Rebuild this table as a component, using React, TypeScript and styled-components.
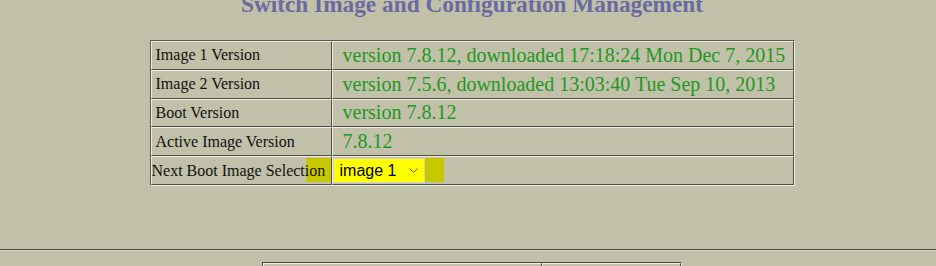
import React from "react";
import styled, { createGlobalStyle } from "styled-components";

const Global = createGlobalStyle`
  html, body { margin: 0; padding: 0; overflow: hidden; }
  body { background: #c1c0a8; font-family: "Liberation Serif", "Times New Roman", serif; }
`;

const Page = styled.div`
  width: 936px;
  height: 266px;
  overflow: hidden;
`;

const Content = styled.div`
  padding-left: 8px;
`;

const Title = styled.h2`
  margin: -10px 0 0;
  text-align: center;
  font-size: 23.3px;
  font-weight: bold;
  color: #6a6aa2;
  line-height: 28px;
`;

const TableWrap = styled.div`
  position: relative;
  width: 645px;
  margin: 22px auto 0;
`;

const Highlight = styled.span`
  position: absolute;
  left: 156px;
  top: 118px;
  width: 138px;
  height: 24px;
  background: #c9c800;
  filter: blur(0.5px);
  z-index: 0;
`;

const InfoTable = styled.table`
  position: relative;
  z-index: 1;
  width: 645px;
  border-collapse: separate;
  border-spacing: 0;
  border: 1px solid;
  border-color: #5c5c52 #eeeee4 #eeeee4 #5c5c52;
`;

const Row = styled.tr`
  height: 28.8px;
`;

const Cell = styled.td<{ $label?: boolean; $indent?: number }>`
  box-sizing: border-box;
  padding: 0 0 0 ${(p) => p.$indent ?? 0}px;
  border: 1px solid;
  border-color: #eeeee4 #4e4e48 #4e4e48 #eeeee4;
  vertical-align: middle;
  white-space: nowrap;
  width: ${(p) => (p.$label ? "181px" : "auto")};
  font-size: ${(p) => (p.$label ? "16px" : "20px")};
  color: ${(p) => (p.$label ? "#111" : "#1f981f")};
`;

const SelectBox = styled.div`
  position: relative;
  width: 92px;
  height: 25px;
`;

const Select = styled.select`
  appearance: none;
  -webkit-appearance: none;
  box-sizing: border-box;
  width: 92px;
  height: 25px;
  margin: 0;
  padding: 0 0 0 6px;
  background: #ffff00;
  border: 1px solid #d4d4cc;
  border-radius: 0;
  font-family: "Liberation Sans", Arial, sans-serif;
  font-size: 16px;
  color: #000;
  outline: none;
`;

const Chevron = styled.svg`
  position: absolute;
  right: 7px;
  top: 10px;
  width: 9px;
  height: 5px;
  pointer-events: none;
`;

const Rule = styled.div`
  height: 0;
  margin-top: 63px;
  border-top: 1px solid #4a4a44;
  border-bottom: 1px solid #d6d6c6;
`;

const FooterTable = styled.table`
  width: 420px;
  margin: 11px 0 0 262px;
  border-collapse: separate;
  border-spacing: 0;
  border: 1px solid;
  border-color: #4a4a44 #eeeee4 #eeeee4 #4a4a44;
`;

const FooterCell = styled.td<{ $w?: number }>`
  height: 30px;
  padding: 0;
  width: ${(p) => (p.$w ? `${p.$w}px` : "auto")};
  border: 1px solid;
  border-color: #eeeee4 #4a4a44 #4a4a44 #eeeee4;
`;

const rows: [string, string][] = [
  ["Image 1 Version", "version 7.8.12, downloaded 17:18:24 Mon Dec 7, 2015"],
  ["Image 2 Version", "version 7.5.6, downloaded 13:03:40 Tue Sep 10, 2013"],
  ["Boot Version", "version 7.8.12"],
  ["Active Image Version", "7.8.12"],
];

export default function App() {
  return (
    <Page>
      <Global />
      <Content>
        <Title>Switch Image and Configuration Management</Title>
        <TableWrap>
          <Highlight />
          <InfoTable>
            <tbody>
              {rows.map(([label, value]) => (
                <Row key={label}>
                  <Cell $label $indent={4}>
                    {label}
                  </Cell>
                  <Cell $indent={10}>{value}</Cell>
                </Row>
              ))}
              <Row>
                <Cell $label>Next Boot Image Selection</Cell>
                <Cell>
                  <SelectBox>
                    <Select defaultValue="1">
                      <option value="1">image 1</option>
                      <option value="2">image 2</option>
                    </Select>
                    <Chevron viewBox="0 0 9 5">
                      <path d="M0.5 0.5 L4.5 4.5 L8.5 0.5" fill="none" stroke="#555" strokeWidth="1" />
                    </Chevron>
                  </SelectBox>
                </Cell>
              </Row>
            </tbody>
          </InfoTable>
        </TableWrap>
      </Content>
      <Rule />
      <FooterTable>
        <tbody>
          <tr>
            <FooterCell $w={277} />
            <FooterCell />
          </tr>
        </tbody>
      </FooterTable>
    </Page>
  );
}
